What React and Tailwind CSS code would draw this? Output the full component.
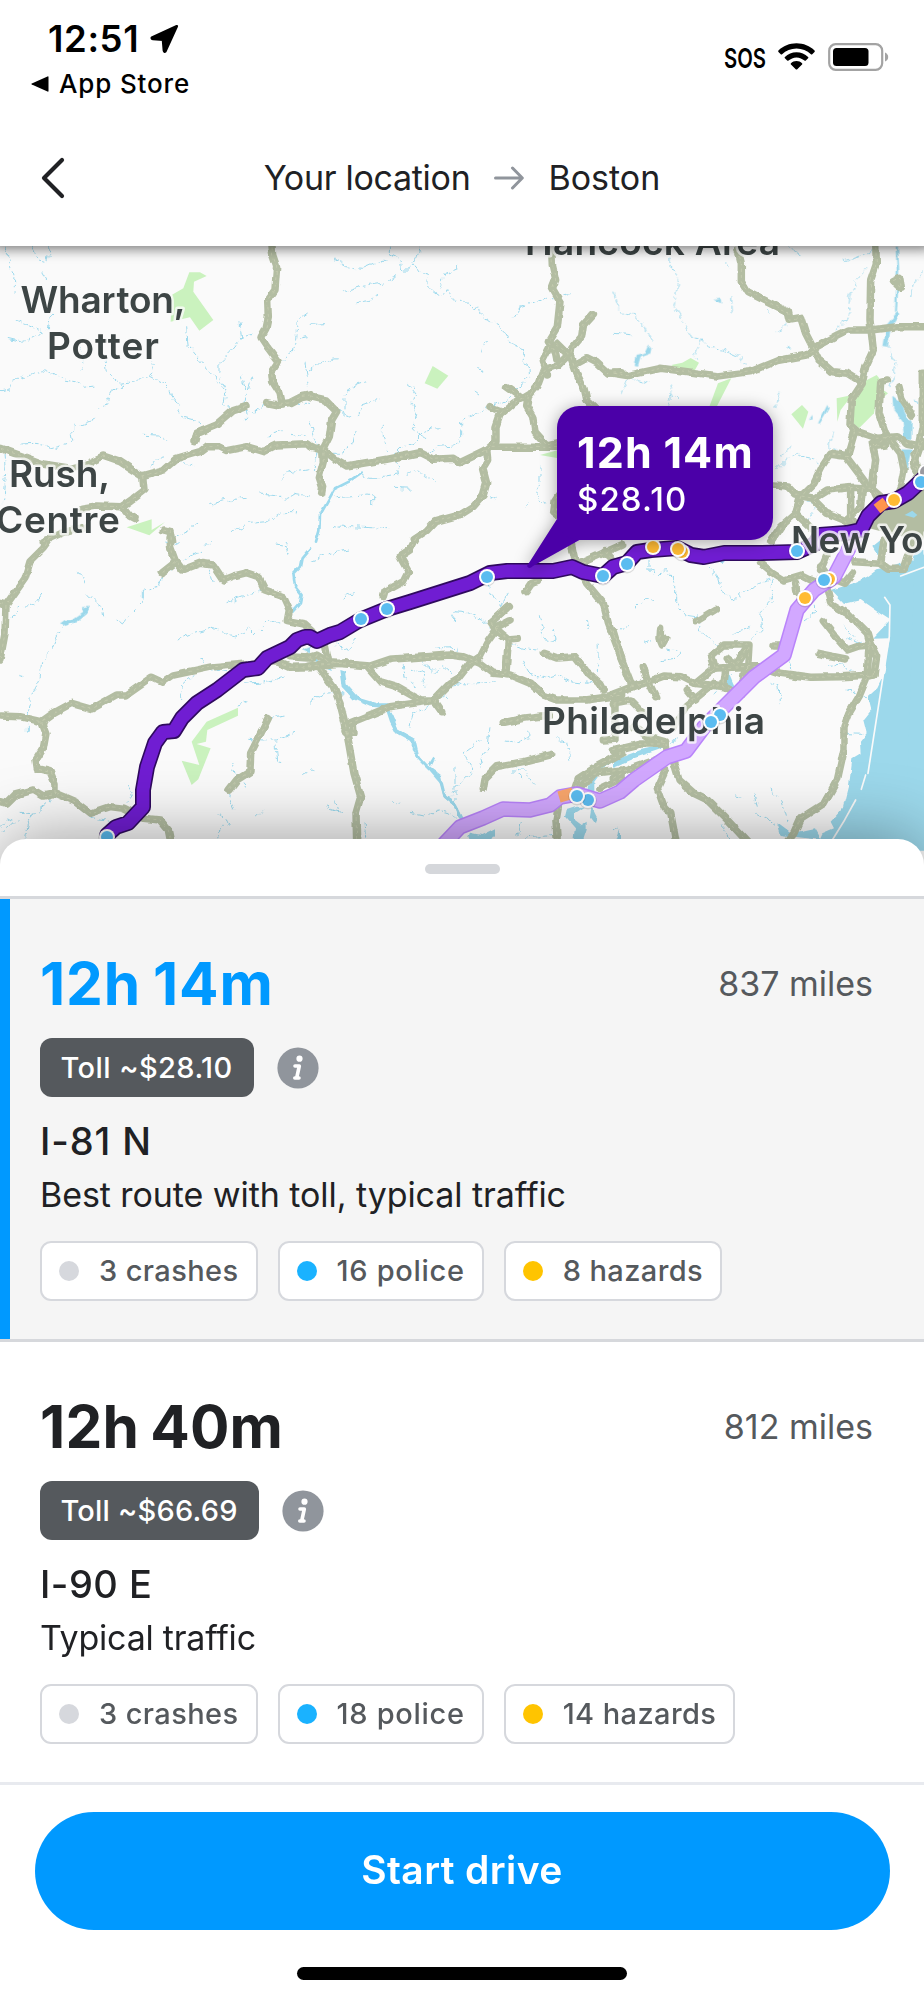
import React from "react";

/* Map geometry is stored per tile; each tile is drawn at a third of its own units. */
const TILES = [
  {
    x: 0, y: 240,
    roads: [
      "M815 0L818 45L830 80L825 150L803 180L805 230L798 265L783 292L805 325L835 365L815 395L818 425L840 460L847 492",
      "M800 488L830 494L870 488L905 470L932 465",
      "M738 500L700 512L650 555L590 580L585 602",
      "M0 625L70 650L130 672L210 685L265 670L310 648L360 665L425 708L490 690L530 655L600 635L620 620L655 620L680 632L740 620L790 635L830 615L920 611L934 622",
      "M428 708L432 750L400 775L365 800L290 798L245 805",
      "M365 800L385 825L405 835",
      "M130 905L190 878L250 862",
      "M490 870L510 875L515 905",
    ],
    streams: [
      "M15 20L30 70L45 105L42 155", "M75 0L100 30L115 60L140 65L150 20", "M125 95L140 120",
      "M50 240L85 255L130 275L95 295L65 305L22 295", "M155 225L145 265",
      "M560 265L565 320L600 365L640 405L650 430L680 455L675 490L700 515L740 505L762 518L795 490",
      "M720 250L725 295L760 280M720 300L690 335L660 365L660 420L675 450",
      "M920 222L895 240L890 295L920 290M890 300L880 330L850 355L835 370",
      "M725 400L740 450L735 490L740 545M758 410L745 450",
      "M315 350L318 395L360 430L400 425L450 408L460 375L450 355M450 408L490 430L510 450L520 480L545 530L600 545L615 565",
      "M0 455L30 450L40 425L100 400L130 392L165 405L190 420L225 425L250 442L285 438",
      "M370 435L330 460L320 490L295 505", "M290 535L230 560L210 580L215 605L185 615L150 625L130 612L100 610L70 612",
      "M430 583L470 585L510 605", "M450 675L475 660L500 642", "M530 655L560 670L585 682",
      "M625 797L680 780L740 775", "M775 762L810 765L860 772L880 760L930 768", "M690 878L745 850L800 845L850 818L900 818",
      "M845 720L870 695L930 685", "M800 585L845 572", "M870 580L930 590", "M15 640L20 700L10 790",
      "M520 890L580 860L600 850", "M850 490L930 490", "M240 320L255 360L240 390", "M915 365L925 440",
    ],
    parks: [
      "M568 97L600 97L620 108L582 125L580 155L640 240L598 272L570 232L512 245L515 165L550 145Z",
      "M380 862L455 838L455 870L495 846L448 886Z",
    ],
  },
  {
    x: 310, y: 240,
    roads: [
      "M725 20L727 75L737 120L727 145L750 185L742 260L715 305L735 330L740 355",
      "M850 222L820 255L815 290L785 325L782 350L800 400L822 445L830 480L852 500",
      "M740 310L775 345L745 375L700 390L685 430L660 460L610 490L570 525L558 560L558 605L530 630L450 668L430 655L370 658L330 638L230 658L110 678L70 655L38 630L0 620",
      "M720 320L697 365L712 405", "M590 440L640 475", "M540 500L580 515",
      "M680 440L655 470L650 500L668 530L675 575L710 615L742 608", "M545 622L745 622",
      "M0 470L45 480L80 515L65 540L58 590L38 630L40 665L28 710L38 740L35 760",
      "M530 630L533 660L518 685L530 730L520 765L490 800L450 825L375 845L350 872L310 898",
      "M795 372L830 353L860 368L895 400L934 398", "M740 825L728 815L732 785L745 765",
    ],
    streams: [
      "M75 60L110 80L155 85L190 70L235 58", "M238 20L238 45L270 60L275 90L300 90L310 72L330 100L355 105L350 130L375 155L395 170L415 152L430 180L460 185L495 208L505 195L510 225L545 245L580 265L595 290L605 315L640 330L640 365L660 380L662 412L620 445L590 480L540 505L500 520L455 545L455 600L430 615L380 620L355 640",
      "M100 155L150 140L220 130L265 110", "M140 188L180 182L205 165", "M445 82L405 100L390 140",
      "M330 20L322 50L310 72", "M610 235L630 205L665 195L710 172L745 180M760 162L785 155",
      "M515 340L520 310L545 298", "M505 385L515 390L515 398", "M495 450L508 460", "M0 250L45 248", "M0 390L30 370L60 360L90 355",
      "M105 530L105 470L125 440L170 425M80 510L140 530L160 495L205 480", "M295 430L315 440L305 490L320 520L310 570L350 600",
      "M0 540L10 590L25 620L10 690", "M135 570L130 610L90 640L60 640", "M220 550L220 590L230 630",
      "M155 700L180 712L220 712L265 705L260 640L280 620L310 605L340 575L385 563", "M250 745L310 748", "M290 700L325 690L340 705L380 728",
      "M80 770L165 765M170 762L188 765L188 795", "M65 870L80 858L240 866", "M640 798L655 785", "M545 775L562 768", "M690 680L690 730L680 760L710 800",
    ],
    rivers: ["M155 697L120 722L75 745L50 790L30 825L28 870L18 905"],
    parks: ["M368 378L415 407L382 446L344 430Z", "M690 645L745 630L745 655Z"],
  },
  {
    x: 614, y: 240,
    roads: [
      "M372 30L382 70L382 125L400 155L460 185L520 215L525 238L560 232L575 280L598 325L615 360L655 395L700 400L740 425",
      "M-2 400L40 407L140 385L220 395L310 408L410 395L490 362L580 345L610 318L660 290L700 270L770 270L850 260L930 260",
      "M785 0L787 70L770 120L768 240L778 330L755 380L745 430L712 480L708 555L730 575L790 595L850 590L880 610L930 620",
      "M722 575L700 650L650 642L625 680L600 730L560 770L545 820L500 860L470 905",
      "M480 735L520 738L545 765L600 775L640 750L720 742L770 745", "M700 655L760 735L800 770",
      "M820 420L800 425L795 520L815 580L860 640L870 690L860 740L840 790", "M855 440L865 480L895 525",
      "M838 125L858 115L862 145L845 130", "M925 400L925 560L900 680L927 720", "M775 610L785 660L775 740",
      "M545 820L600 872", "M600 780L640 820L690 840L720 880", "M710 745L710 830L735 870", "M745 745L740 800L700 840",
      "M820 590L780 620L815 615", "M780 760L800 800L770 850", "M900 640L915 700L890 740", "M925 600L905 660",
    ],
    streams: [
      "M165 55L165 80L190 90L190 140L180 200L210 250L235 295L265 300L285 325L330 330L375 350L400 380", "M265 300L240 345L250 360",
      "M0 155L15 210L60 225L90 260L110 300", "M0 280L60 285", "M300 185L322 183", "M350 175L352 222", "M460 210L472 222",
      "M515 20L560 48", "M690 65L730 52L780 30", "M765 80L725 120L710 170L705 240L660 270", "M492 272L520 252",
      "M820 320L850 365L840 410L830 440", "M20 460L35 420L70 420L105 430",
      "M165 430L175 465L160 500M170 460L190 480", "M480 500L495 455", "M485 690L520 655L555 640", "M500 650L530 618", "M550 650L600 660L620 680",
      "M655 575L645 620L690 640", "M560 780L610 800L580 840", "M335 70L350 85", "M890 165L910 110L927 95", "M515 325L532 320", "M900 480L927 490",
    ],
    lakes: [
      "M105 315L115 325L112 340L80 352L72 380L62 378L68 348L92 342Z", "M850 215L856 225L830 265L822 320L808 318L818 255Z",
      "M845 20L852 20L856 90L849 215L843 215L848 90Z",
      "M835 470L862 490L880 530L893 545L892 600L870 600L866 545L838 510Z", "M865 625L893 625L880 690Z",
      "M612 550L640 495L644 505L618 550Z", "M585 540L595 525L596 538Z", "M300 180L320 176L322 190Z",
    ],
    ponds: ["M872 825L895 812L910 825L900 833Z"],
    parks: [
      "M172 375L205 368L230 354L255 368L240 395L190 386Z", "M312 430L352 415L308 500L286 500Z", "M532 523L564 495L583 515L567 566Z",
      "M668 475L715 465L680 510L670 545Z", "M740 430L788 405L800 420L780 520L735 565L718 550L720 480Z", "M800 445L822 460L805 475Z",
    ],
  },
  {
    x: 0, y: 540,
    roads: [
      "M152 -5L130 25L90 65L75 115L18 195L15 280L0 360", "M0 190L18 195",
      "M510 -5L512 25L525 60L548 90L600 70L640 75L670 120L700 108L740 98L775 110L795 150L850 170L868 210L862 242L915 252L935 270", "M525 68L487 98",
      "M0 528L60 530L125 545L160 520L215 490L275 507L350 465L380 465L455 412L487 427L520 405L640 380L760 370L830 365L870 382L935 380", "M870 350L935 355",
      "M125 545L138 580L130 625L108 660L112 685L150 695L165 730L165 760L130 768L100 750L45 765L20 790L0 785",
      "M165 760L225 785L270 820L330 800L370 805L430 835L480 840L505 870L512 905",
      "M805 535L780 585L752 640L750 695L710 720L687 750",
    ],
    streams: [
      "M232 100L250 105L258 130", "M265 165L285 185L310 205L314 232", "M230 245L190 255L170 290L155 330L125 370L120 420L95 470L85 520L85 575",
      "M345 232L370 255L385 235M370 245L430 185L430 150L480 138L490 105L525 80", "M550 60L610 30L635 0", "M30 235L60 200L100 195L125 162",
      "M530 300L575 280L640 262L680 282L715 290L745 265L765 285L800 250L840 245", "M680 188L740 165L790 155", "M628 85L640 125",
      "M830 15L860 20L870 45M855 0L865 15", "M605 355L625 385L700 395", "M590 400L545 440L545 480", "M710 495L745 485", "M730 430L800 425L860 410",
      "M805 535L860 528", "M745 595L790 600L830 600L885 580M825 610L830 665L845 668", "M695 665L705 700L740 745", "M770 830L788 812",
      "M655 825L690 845L655 875L657 895", "M685 760L705 810", "M910 705L930 685", "M105 825L85 855L75 895M155 780L100 825L65 820",
      "M385 735L400 760L380 790", "M0 860L20 840L50 830M5 880L30 850L60 845", "M55 412L70 416", "M490 0L530 10L545 0", "M270 830L300 840L350 845",
    ],
    rivers: ["M930 25L905 55L900 80L880 100L885 140L905 165L900 190L878 215"],
    lakes: ["M180 250L195 240L215 240L250 215L245 205L270 200L262 218L230 245L195 258Z", "M905 330L930 320L930 340Z"],
    parks: ["M714 503L714 527L622 570L618 605L590 612L632 625L595 718L575 735L545 662L598 675L575 605L620 545Z"],
  },
  {
    x: 310, y: 540,
    roads: [
      "M318 -5L300 30L270 50L295 95L280 125L225 155L220 172", "M-5 352L20 345L60 368L180 378L240 358L420 345L460 350L510 370L550 400L600 405L660 430L700 465L740 480L830 480L935 465",
      "M45 310L55 360", "M-5 378L110 368", "M175 385L210 425L260 440L330 480L370 480L395 515",
      "M118 550L240 500L370 482L420 430L445 415L480 370L510 350L530 310L560 268L545 245L595 200", "M555 262L600 240", "M565 275L595 300L622 298", "M595 300L588 400",
      "M30 385L70 440L90 490L105 550L118 620L132 700L152 770L138 820L140 905", "M105 575L132 580L130 555",
      "M580 548L640 535L720 525", "M520 745L525 715L560 680L640 665L725 643", "M648 155L665 130L685 125",
      "M700 340L740 354L795 350L830 395L870 430L880 450", "M780 -5L795 60L830 130L880 190L895 250L935 355", "M800 75L935 15", "M885 35L905 55",
      "M880 600L915 598L915 480", "M935 640L860 680L805 715L795 745", "M935 690L850 700L820 735", "M935 715L870 745", "M745 800L738 840L742 905",
    ],
    streams: [
      "M0 65L60 40L115 30", "M98 175L132 158", "M80 315L110 330L140 295", "M430 240L435 215L480 220L520 240L540 260", "M530 135L555 180L575 200L600 155",
      "M380 325L440 322L445 345", "M690 225L700 260L690 290L735 300L730 270", "M830 240L835 270M825 250L842 262", "M600 310L640 325L680 330",
      "M280 370L285 410L320 440M330 360L380 400L395 380L430 410M300 380L340 400L345 440", "M0 490L40 460L100 455", "M400 440L450 430L500 435L560 425", "M360 490L400 460L420 480",
      "M640 365L660 400L710 415L740 405L780 425L830 430L860 420", "M540 565L535 620L510 660L520 690", "M515 600L460 640L490 690L440 740L420 775", "M435 680L435 780",
      "M590 600L620 605L660 590L640 570", "M300 560L310 520L360 500", "M250 785L275 790M300 820L340 828L385 810L420 820L450 845", "M45 800L100 820M75 780L85 810",
      "M600 690L650 690L670 740M620 680L640 720", "M735 590L770 610L780 660", "M620 890L635 850", "M640 895L740 885", "M865 310L862 400", "M390 325L402 322", "M0 690L10 695", "M165 850L170 890",
    ],
    rivers: ["M455 835L440 800L405 770L395 730L360 690L325 655L312 600L262 572L245 530L230 505", "M0 345L25 370L60 385"],
    lakes: [
      "M88 390L105 395L110 430L150 475L200 490L235 490L240 505L180 500L130 478L95 440Z", "M230 515L242 515L265 570L310 595L315 635L350 675L390 705L405 765L440 790L465 840L450 840L435 800L400 770L385 715L335 670L305 630L305 605L258 580L240 545Z",
      "M475 890L480 878L515 885L545 870L555 865L555 885L545 900L480 900Z", "M930 650L880 685L850 725L850 755L830 760L838 720L875 680Z",
      "M800 800L825 800L795 820L795 840L815 855L830 845L830 870L818 905L790 905L795 865L765 830L770 810Z", "M845 800L860 830L855 850L840 830Z", "M930 870L920 900L930 905Z", "M358 670L370 650L375 655L362 680Z",
    ],
    parks: [],
  },
  {
    x: 614, y: 540,
    roads: [
      "M-3 275L20 350L55 440", "M-2 462L55 440L90 430L150 408L200 410L240 430L330 440L380 465", "M88 380L100 420L125 470", "M-2 490L50 480L90 520",
      "M140 265L138 295L145 312L155 295", "M245 245L305 208", "M220 450L245 480M300 430L215 500L180 560", "M245 430L300 385L380 380L440 380L500 400L590 412L680 410L780 405",
      "M300 385L290 350L330 315L405 315L400 400", "M330 430L335 390", "M340 355L365 375L395 330", "M385 415L390 380", "M480 318L500 318",
      "M440 70L470 95L510 120L560 105L590 120L640 140", "M545 130L548 155",
      "M640 150L650 190L700 220L760 280L768 310L788 350L780 405L760 410L735 470L705 520L690 560L690 630L670 720L630 790L560 835L540 880L520 905",
      "M765 320L760 400", "M770 315L735 318L700 330L665 290L628 243", "M612 340L695 357", "M620 80L640 110L690 130L715 100", "M720 65L800 70L825 88L870 88L900 0", "M800 70L810 0", "M640 40L620 90",
      "M180 670L195 720L240 760L280 780L340 840L400 905", "M155 690L130 745L150 800L170 820L185 900", "M-2 632L80 612L150 612", "M-2 715L40 690L130 658", "M60 560L100 590L155 605L160 640",
    ],
    streams: [
      "M105 60L105 90L135 98L160 95L182 120L182 190L215 225L250 230L260 270L310 320", "M65 205L95 175L120 185", "M250 30L270 80L310 110L320 150L360 180L400 150L440 130L475 115L475 180L440 220L445 260L410 300",
      "M365 280L410 265", "M140 362L185 355L200 340L160 330", "M90 310L115 302", "M15 270L45 258", "M470 430L495 440L500 490", "M570 245L605 220L600 190", "M700 290L740 310M640 380L680 375L715 395",
      "M300 465L320 430L350 400", "M430 820L470 840L500 860L540 885M470 750L490 765M500 780L520 850", "M420 765L430 800", "M360 768L382 773", "M510 350L540 385", "M195 600L170 610L200 590", "M325 860L345 895", "M0 870L10 862", "M690 255L720 290",
      "M695 450L722 455", "M740 470L790 480", "M700 578L745 580",
    ],
    lakes: [
      "M650 150L720 128L760 110L790 88L840 78L927 50L940 50L940 935L600 935L625 880L660 865L650 845L690 800L700 760L705 740L715 655L740 640L738 605L758 580L748 540L772 510L762 470L790 445L812 400L818 340L828 295L775 296L800 270L828 240L790 215L740 180L690 192Z",
      "M775 20L800 0L805 30L790 45Z", "M900 40L912 40L912 85L890 80Z", "M0 660L80 630L145 615L148 625L60 655L0 680Z", "M345 400L358 430L365 445L325 440Z", "M490 850L530 880L600 865L620 900L500 885Z", "M310 62L340 62L330 72Z",
    ],
    shores: ["M812 172L828 195L826 290L790 520L762 700", "M755 705L742 748", "M725 780L692 840L655 900", "M860 108L930 82"],
    parks: [],
  },
];

const MAIN_ROUTE =
  "M107 835L116 827L128 823L143 807L143 790L147 767L155 743L163 732L174 731L182 718L197 703L217 690L243 670L258 668L267 658L290 647L297 640L305 637L310 637L317 641L330 635L340 632L360 620L387 609L410 602L470 583L490 573L507 571L553 571L572 567L583 572L603 576L613 567L627 563L637 552L651 550L677 548L691 555L704 557L724 553L760 553L797 552L815 544L820 535L847 533L861 530L868 516L881 503L894 501L908 493L926 476";
const ALT_ROUTE =
  "M443 845L460 827L483 818L503 809L530 810L550 805L560 797L577 794L600 801L620 792L634 780L667 757L686 751L704 727L724 707L754 677L784 655L797 610L814 590L834 577L848 550L856 535";

const PINS = [
  [107, 837, "b"], [361, 619, "b"], [387, 609, "b"], [487, 577, "b"], [603, 576, "b"], [588, 800, "b"], [577, 796, "b"],
  [627, 564, "b"], [653, 547, "y"], [682, 552, "y"], [678, 549, "y"], [797, 551, "b"], [829, 579, "y"], [824, 580, "b"],
  [805, 598, "y"], [720, 715, "b"], [711, 722, "b"], [926, 472, "g"], [921, 482, "b"], [894, 500, "y"],
];
const PIN_COLORS = { b: "#5bbcf0", y: "#ffbb33", g: "#9a9aa0" };

const LABELS = [
  { t: "Wharton,", x: 20.5, y: 312.7, w: 165 },
  { t: "Potter", x: 47, y: 358.7, w: 112 },
  { t: "Rush,", x: 9, y: 486.7, w: 101 },
  { t: "Centre", x: -4, y: 533, w: 124 },
  { t: "Hancock Area", x: 525, y: 254.7, w: 255 },
  { t: "New York", x: 791, y: 552.7, w: 168 },
  { t: "Philadelphia", x: 542, y: 734, w: 223 },
];

function Layer({ kind, ...props }) {
  return (
    <g {...props}>
      {TILES.map((tile, i) => (
        <g key={i} transform={`translate(${tile.x} ${tile.y}) scale(0.3333)`}>
          {(tile[kind] || []).map((d, j) => (
            <path key={j} d={d} />
          ))}
        </g>
      ))}
    </g>
  );
}

function MapView() {
  return (
    <div className="relative h-[619px] overflow-hidden bg-[#fafafa]">
      <svg className="block h-[631px] w-[924px]" viewBox="0 246 924 631" strokeLinecap="round" strokeLinejoin="round">
        <defs>
          <filter id="meander" filterUnits="userSpaceOnUse" x="0" y="240" width="924" height="640">
            <feTurbulence type="fractalNoise" baseFrequency="0.11" numOctaves="2" seed="4" />
            <feDisplacementMap in="SourceGraphic" scale="9" xChannelSelector="R" yChannelSelector="G" />
          </filter>
          <filter id="wobble" filterUnits="userSpaceOnUse" x="0" y="240" width="924" height="640">
            <feTurbulence type="fractalNoise" baseFrequency="0.09" numOctaves="2" seed="9" />
            <feDisplacementMap in="SourceGraphic" scale="4.500" xChannelSelector="R" yChannelSelector="G" />
          </filter>
        </defs>
        <Layer kind="parks" fill="#caf2be" />
        <g filter="url(#meander)">
          <Layer kind="streams" fill="none" stroke="#9cd9ed" strokeWidth="3" strokeDasharray="16 6 30 9 8 6" strokeLinecap="butt" />
        </g>
        <g filter="url(#wobble)">
          <Layer kind="rivers" fill="none" stroke="#9cd9ed" strokeWidth="8" />
          <Layer kind="lakes" fill="#9cd8eb" />
        </g>
        <path d="M915 550H924V850H905Z" fill="#9cd8eb" />
        <Layer kind="shores" fill="none" stroke="#fafafa" strokeWidth="5" />
        <path d="M904 493L924 478V540L900 536L868 528L880 515Z" fill="#b3bda2" />
        <Layer kind="ponds" fill="#9cd8eb" />
        <g filter="url(#wobble)">
          <Layer kind="roads" fill="none" stroke="#b3bda2" strokeWidth="22.500" />
          <Layer kind="roads" fill="none" stroke="#c6cdb1" strokeWidth="2.5" strokeDasharray="9 10" strokeLinecap="butt" />
        </g>

        <path d={ALT_ROUTE} fill="none" stroke="#b984fa" strokeWidth="15.5" />
        <path d={ALT_ROUTE} fill="none" stroke="#d2a8ff" strokeWidth="12.5" />
        <path d="M559 797L573 793" fill="none" stroke="#f9a66c" strokeWidth="11.5" strokeLinecap="butt" />
        <path d={MAIN_ROUTE} fill="none" stroke="#2f0a5e" strokeWidth="16" />
        <path d={MAIN_ROUTE} fill="none" stroke="#701dd2" strokeWidth="12.8" />
        <path d="M877 509L886 502" fill="none" stroke="#ff944d" strokeWidth="11" strokeLinecap="butt" />

        <g fontFamily="Inter, sans-serif" fontSize="37" fontWeight="600" fill="#3d4545" stroke="#fafafa" strokeOpacity="0.8" strokeWidth="5" paintOrder="stroke">
          {LABELS.map((l) => (
            <text key={l.t} x={l.x} y={l.y} textLength={l.w}>{l.t}</text>
          ))}
        </g>

        {PINS.map(([x, y, c], i) => (
          <g key={i}>
            <circle cx={x} cy={y + 0.6} r="8.8" fill="#000" opacity="0.12" />
            <circle cx={x} cy={y} r="8" fill="#fff" />
            <circle cx={x} cy={y} r="6" fill={PIN_COLORS[c]} />
          </g>
        ))}
      </svg>

      <div className="absolute -left-2 -right-2 -top-4 h-4 shadow-[0_2px_14px_rgba(0,0,0,0.6)]" />

      <div className="absolute left-[557px] top-[160px] h-[134px] w-[216px] drop-shadow-[0_2px_8px_rgba(0,0,0,0.35)]">
        <svg className="absolute -left-[30px] top-[100px]" width="62" height="64" viewBox="0 0 62 64">
          <path d="M30 13L0 60Q2 64 6 60L56 32Z" fill="#4b00a8" />
        </svg>
        <div className="relative flex h-full flex-col rounded-[22px] bg-[#4b00a8] pl-5 pt-[22px] text-white">
          <span className="text-[43px] font-bold leading-[48px] tracking-[1.2px] [word-spacing:-1px]">12h 14m</span>
          <span className="mt-[3px] text-[33px] font-medium leading-[40px] tracking-[1.1px]">$28.10</span>
        </div>
      </div>
    </div>
  );
}

function StatusBar() {
  return (
    <div className="flex h-[108px] justify-between pr-[35px] text-black">
      <div className="flex flex-col pl-[31px] pt-[19px]">
        <div className="flex items-center gap-[11px] pl-[17px]">
          <span className="text-[36.500px] font-semibold leading-10 tracking-[0.6px]">12:51</span>
          <svg width="29" height="30" viewBox="0 0 29 30" stroke="#000" strokeWidth="2.600" strokeLinejoin="round">
            <path d="M26.800 2.300L1.800 13.600Q1.600 14.800 3 14.900L13 15.600L13.900 26.500Q14.300 28.200 15.400 27.200Z" />
          </svg>
        </div>
        <div className="mt-[9px] flex items-center gap-[10px]">
          <svg width="18" height="16" viewBox="0 0 18 16">
            <path d="M17.5 1v14q0 1-1 .6L.8 8.600q-.9-.6 0-1.200L16.500.400q1-.4 1 .6Z" />
          </svg>
          <span className="text-[26px] font-medium leading-8 tracking-[0.85px]">App Store</span>
        </div>
      </div>
      <div className="flex items-center pt-[5px]">
        <svg width="43" height="36" viewBox="0 0 43 36">
          <text x="0" y="28.500" fontFamily="Inter, sans-serif" fontSize="27.500" fontWeight="600" textLength="42" lengthAdjust="spacingAndGlyphs">SOS</text>
        </svg>
        <svg className="ml-[11px]" width="37" height="27" viewBox="0 0 38 27">
          <path d="M19 0C11.800 0 5.200 2.800.5 7.400q-.7.7 0 1.400l2.300 2.300q.7.700 1.400 0C8.100 7.400 13.300 5.200 19 5.200s10.900 2.200 14.800 5.900q.7.700 1.400 0l2.300-2.300q.7-.7 0-1.400C32.800 2.800 26.200 0 19 0Z" />
          <path d="M19 9.200c-4.600 0-8.800 1.800-11.900 4.700q-.8.700 0 1.500l2.300 2.200q.7.700 1.400.1c2.100-2 5-3.300 8.200-3.300s6.100 1.300 8.200 3.300q.7.600 1.400-.1l2.300-2.200q.8-.8 0-1.500C27.800 11 23.600 9.200 19 9.200Z" />
          <path d="M19 18.200c-2.200 0-4.200.8-5.700 2.200q-.7.700 0 1.400l4.900 4.800q.8.700 1.600 0l4.900-4.800q.7-.7 0-1.400c-1.500-1.400-3.500-2.200-5.700-2.200Z" />
        </svg>
        <svg className="ml-[13px]" width="61" height="28" viewBox="0 0 61 28">
          <rect x="1.200" y="1.200" width="53" height="25.600" rx="6.500" fill="none" stroke="#a3a3a3" strokeWidth="2.200" />
          <rect x="5" y="5" width="35.500" height="18" rx="3.500" />
          <path d="M57 9.500q3.200 1.500 3.200 4.500T57 18.500Z" fill="#a3a3a3" />
        </svg>
      </div>
    </div>
  );
}

function NavBar() {
  return (
    <div className="grid h-[138px] grid-cols-[1fr_auto_1fr] items-center pt-[2px] text-[34px] leading-10 text-[#202124]">
      <svg className="ml-[41px]" width="24" height="42" viewBox="0 0 24 42" fill="none" stroke="currentColor" strokeWidth="4.200" strokeLinecap="round" strokeLinejoin="round">
        <path d="M21 3L3 21L21 39" />
      </svg>
      <div className="flex items-center gap-6">
        <span className="tracking-[-0.3px]">Your location</span>
        <svg width="30" height="24" viewBox="0 0 30 24" fill="none" stroke="#90959c" strokeWidth="3" strokeLinecap="round" strokeLinejoin="round">
          <path d="M1.500 12H28M18.500 2L28.300 12L18.500 22" />
        </svg>
        <span>Boston</span>
      </div>
    </div>
  );
}

function InfoIcon() {
  return (
    <svg width="42" height="42" viewBox="0 0 42 42">
      <circle cx="21" cy="21" r="20.600" fill="#90959c" />
      <circle cx="22.500" cy="11.700" r="3.100" fill="#fff" />
      <path d="M18 19H22.300L19.800 30.500M17.800 31H22" fill="none" stroke="#fff" strokeWidth="3.600" strokeLinecap="round" strokeLinejoin="round" />
    </svg>
  );
}

function Chip({ dot, tracking = "tracking-[0.4px]", children }) {
  return (
    <div className={`flex h-[60px] items-center gap-5 rounded-[11px] border-[2.500px] border-[#d6d8dd] bg-white px-[17px] text-[29px] font-medium text-[#55595d] ${tracking}`}>
      <span className={`size-5 rounded-full ${dot}`} />
      <span>{children}</span>
    </div>
  );
}

function RouteCard({ selected, time, miles, toll, road, note, police, hazards }) {
  return (
    <div
      className={
        selected
          ? "flex h-[443px] border-b-[3px] border-[#d6d8dc] bg-[#f5f5f5]"
          : "flex h-[443px] border-b-[3px] border-[#e8eaef] bg-white"
      }
    >
      <div className={selected ? "w-2.5 bg-[#0099ff]" : "w-2.5"} />
      <div className="flex flex-1 flex-col pl-[30px] pr-[51px] pt-[53px] text-[#202124]">
        <div className="flex items-center justify-between">
          <span className={selected ? "text-[58.500px] font-bold leading-[64px] tracking-[0.9px] text-[#0099ff] [word-spacing:-3px]" : "text-[58.500px] font-bold leading-[64px] tracking-[0.2px] [word-spacing:-3px]"}>
            {time}
          </span>
          <span className="text-[34px] leading-10 text-[#55595d]">{miles}</span>
        </div>
        <div className="mt-[22px] flex items-center gap-[23px]">
          <span className={`flex h-[59px] items-center rounded-[12px] bg-[#55595d] pl-[20.500px] pr-[21.500px] text-[29px] font-medium text-white ${selected ? "tracking-[0.42px]" : "tracking-[0.2px]"}`}>
            {toll}
          </span>
          <InfoIcon />
        </div>
        <span className={`mt-[22px] text-[38px] font-medium leading-[44px] ${selected ? "tracking-[0.9px]" : "tracking-[0.5px]"}`}>{road}</span>
        <span className={`mt-3 text-[34px] leading-10 ${selected ? "tracking-[-0.070px]" : "tracking-[-0.220px]"}`}>{note}</span>
        <div className="mt-[25.500px] flex gap-5">
          <Chip dot="bg-[#d6d8dd]">3 crashes</Chip>
          <Chip dot="bg-[#1ab2ff]" tracking="tracking-[0.7px]">{police}</Chip>
          <Chip dot="bg-[#ffc400]">{hazards}</Chip>
        </div>
      </div>
    </div>
  );
}

export default function App() {
  return (
    <div className="flex h-[1999px] w-[924px] flex-col overflow-hidden bg-white font-['Inter',sans-serif]">
      <StatusBar />
      <NavBar />
      <MapView />
      <div className="relative -mt-[26px] flex flex-1 flex-col rounded-t-[26px] bg-white shadow-[0_0_70px_rgba(0,0,0,0.4)]">
        <div className="flex h-[60px] justify-center border-b-[3px] border-[#d6d8dc] pt-[25px]">
          <div className="h-2.5 w-[75px] rounded-full bg-[#d5d7db]" />
        </div>
        <RouteCard selected time="12h 14m" miles="837 miles" toll="Toll ~$28.10" road="I-81 N" note="Best route with toll, typical traffic" police="16 police" hazards="8 hazards" />
        <RouteCard time="12h 40m" miles="812 miles" toll="Toll ~$66.69" road="I-90 E" note="Typical traffic" police="18 police" hazards="14 hazards" />
        <div className="flex flex-col items-center px-[34.500px] pt-[26.500px]">
          <button className="h-[118px] w-full rounded-full bg-[#0099ff] text-[39px] font-semibold tracking-[0.4px] text-white">Start drive</button>
          <div className="mt-[37px] h-[13px] w-[330px] rounded-full bg-black" />
        </div>
      </div>
    </div>
  );
}
